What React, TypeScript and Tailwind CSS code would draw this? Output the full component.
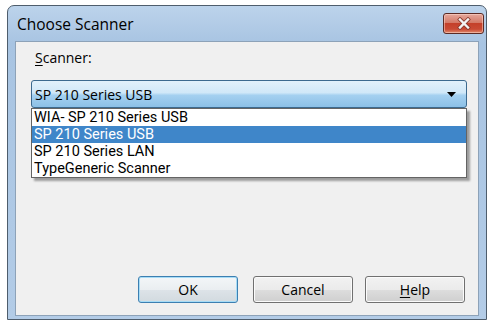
import React from "react";

const font = { fontFamily: '"Open Sans", "Noto Sans", "Liberation Sans", sans-serif' };
const listFont = { fontFamily: 'Roboto, "Open Sans", "Liberation Sans", sans-serif' };

function Btn({ children, def }: { children: React.ReactNode; def?: boolean }) {
  return (
    <div
      className={
        "w-[100px] h-[27px] rounded-[3px] flex items-center justify-center text-[14px] text-black " +
        (def
          ? "border border-[#3c7fb1] shadow-[inset_0_0_0_1px_#a7dcf6] bg-[linear-gradient(#f3f6f8_0%,#eaeef1_50%,#dde3e8_51%,#d2dadf_100%)]"
          : "border border-[#707070] shadow-[inset_0_0_0_1px_#fbfbfb] bg-[linear-gradient(#f2f2f2_0%,#ebebeb_50%,#dddddd_51%,#cfcfcf_100%)]")
      }
    >
      {children}
    </div>
  );
}

export default function App() {
  const items = ["WIA- SP 210 Series USB", "SP 210 Series USB", "SP 210 Series LAN", "TypeGeneric Scanner"];
  return (
    <div className="w-[490px] h-[323px] bg-white relative overflow-hidden" style={font}>
      <div className="absolute left-[7px] top-[5px] w-[480px] h-[315px] border border-[#4e5d6c] rounded-t-[7px] bg-[linear-gradient(#bcd3eb_0%,#a8c4e2_12%,#b3cce7_100%)] flex flex-col">
        {/* Title bar */}
        <div className="h-[35px] flex items-start relative">
          <div className="pl-[9px] pt-[7px] text-[15.5px] leading-[22px] text-black">Choose Scanner</div>
          <div className="absolute right-[2px] top-[7px] w-[41px] h-[21px] rounded-[3px] border border-[#5b2a24] bg-[linear-gradient(#e5a89c_0%,#d47a68_45%,#c4402a_50%,#c94a34_80%,#e08a6c_100%)] flex items-center justify-center shadow-[inset_0_0_0_1px_rgba(255,220,210,0.5)]">
            <svg width="16" height="13" viewBox="0 0 16 13">
              <path d="M4 2.5 L12 10.5 M12 2.5 L4 10.5" stroke="#8a3a2e" strokeWidth="4" strokeLinecap="square" />
              <path d="M4 2.5 L12 10.5 M12 2.5 L4 10.5" stroke="#f4f4f4" strokeWidth="2.4" strokeLinecap="square" />
            </svg>
          </div>
        </div>
        {/* Client area */}
        <div className="flex-1 mx-[7px] mb-[3px] bg-[#f0f0f0] border border-[#8da2b8] flex flex-col">
          <div className="pl-[19px] pt-[6px] text-[14px] leading-[19px] text-black">
            <span className="underline underline-offset-2">S</span>canner:
          </div>
          <div className="ml-[15px] mr-[11px] mt-[13px] h-[28px] rounded-[3px] border border-[#3c6a8f] bg-[linear-gradient(#e2f1fb_0%,#d0e8f8_45%,#a4d0f0_55%,#8cc0e6_100%)] flex items-center justify-between pl-[3px] pr-[10px]">
            <span className="text-[14px] text-black">SP 210 Series USB</span>
            <svg width="9" height="5" viewBox="0 0 9 5">
              <path d="M0 0 H9 L4.5 5 Z" fill="#000" />
            </svg>
          </div>
          <div className="flex-1" />
          <div className="flex justify-end pr-[13px] pb-[12px]">
            <Btn def>OK</Btn>
            <div className="w-[15px]" />
            <Btn>Cancel</Btn>
            <div className="w-[12px]" />
            <Btn>
              <span>
                <span className="underline underline-offset-2">H</span>elp
              </span>
            </Btn>
          </div>
        </div>
      </div>
      {/* Dropdown list overlay */}
      <div
        className="absolute left-[31px] top-[108px] w-[436px] border border-[#646464] bg-white shadow-[3px_3px_2px_rgba(0,0,0,0.35)]"
        style={listFont}
      >
        {items.map((t, i) => (
          <div
            key={t}
            className={
              "h-[17px] flex items-center overflow-hidden pl-[2px] text-[14.5px] leading-[17px] " +
              (i === 1 ? "bg-[#3f86c9] text-white" : "text-black")
            }
          >
            {t}
          </div>
        ))}
      </div>
    </div>
  );
}
